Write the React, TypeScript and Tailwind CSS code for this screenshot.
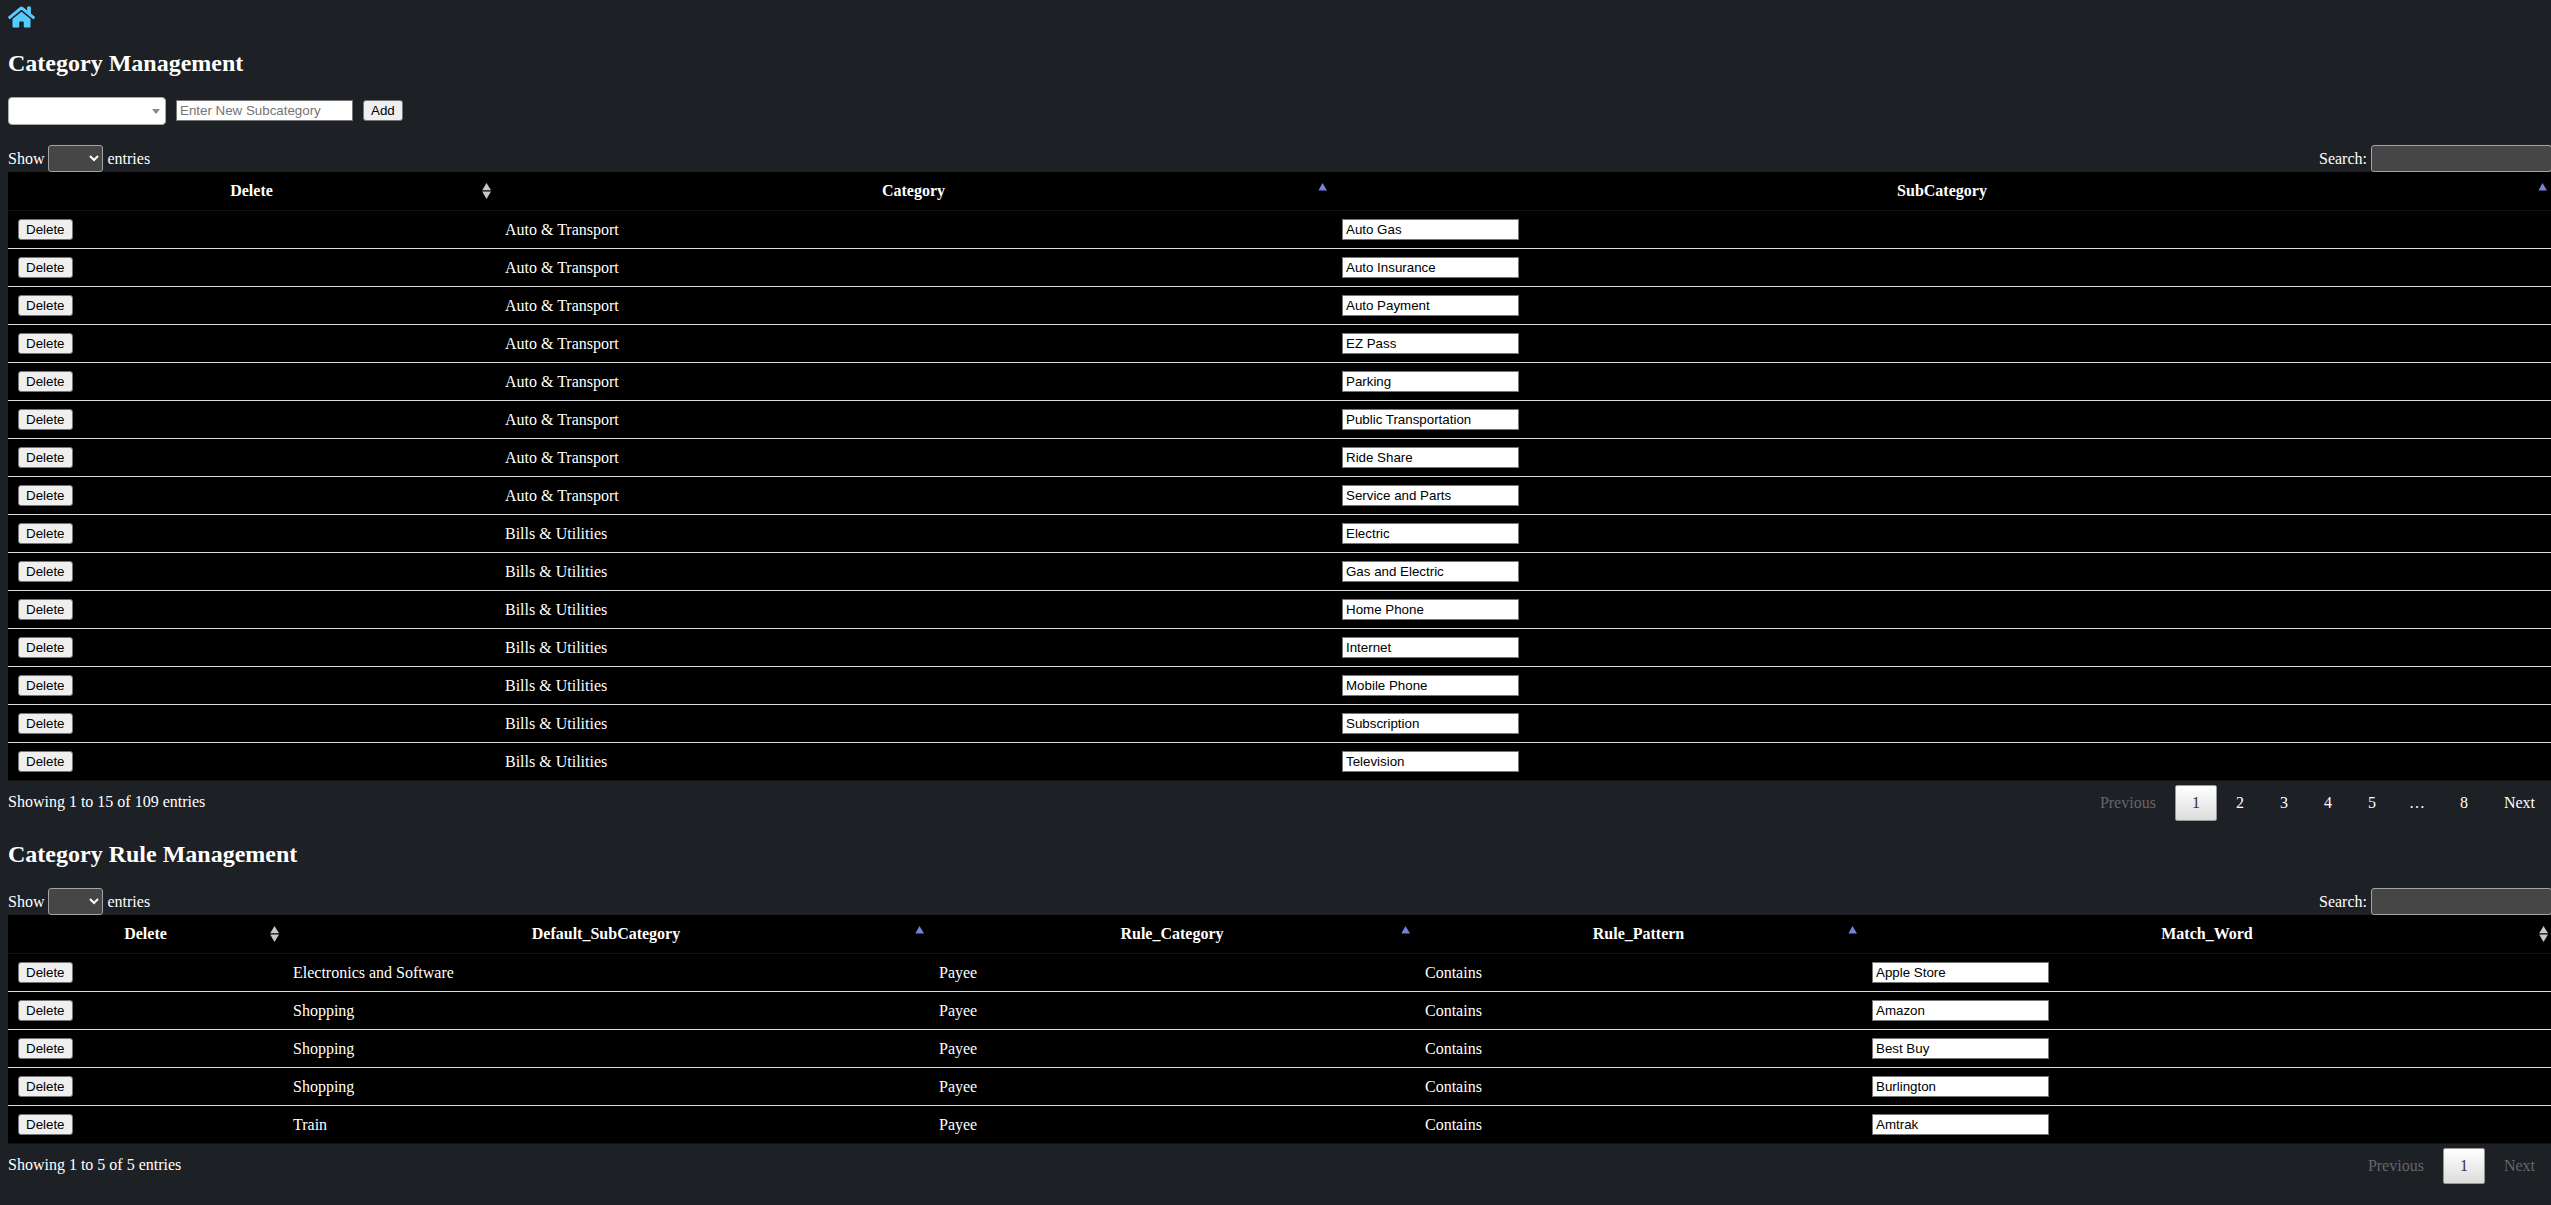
import React from "react";
import { FaHome } from "react-icons/fa";

type Sort = "both" | "asc";

function SortIcon({ kind }: { kind: Sort }) {
  return kind === "asc" ? (
    <span className="absolute right-[5px] top-[11px] block h-[16px] w-[9px]">
      <svg width="9" height="16" viewBox="0 0 9 16" className="block">
        <path d="M4.5 0 L9 7.5 L0.4 7.5 Z" fill="#7b7fdc" />
      </svg>
    </span>
  ) : (
    <span className="absolute right-[4px] top-[11px] block h-[16px] w-[9px]">
      <svg width="9" height="16" viewBox="0 0 9 16" className="block">
        <path d="M4.5 0 L9 7.3 L0.2 7.3 Z" fill="#c8c8c8" />
        <path d="M0.2 8.6 L9 8.6 L4.5 16 Z" fill="#c8c8c8" />
      </svg>
    </span>
  );
}

function NativeButton({ label }: { label: string }) {
  return (
    <button className="block h-[21px] rounded-[3px] border border-[#767676] bg-[#efefef] px-[7px] text-[13.333px] leading-[15px] text-black [font-family:'Liberation_Sans',sans-serif]">
      {label}
    </button>
  );
}

function CellInput({ value }: { value: string }) {
  return (
    <input
      readOnly
      value={value}
      className="block h-[21px] w-[177px] border border-[#767676] bg-white px-[3px] text-[13.333px] leading-[15px] text-black [font-family:'Liberation_Sans',sans-serif]"
    />
  );
}

function Controls() {
  return (
    <div className="flex h-[27px] w-[2544px] items-center justify-between">
      <div className="flex items-center gap-[4px]">
        <span>Show</span>
        <select className="h-[27px] w-[55px] rounded-[3px] border border-[#a3a3a3] bg-[#464646] text-white [color-scheme:dark]" />
        <span>entries</span>
      </div>
      <div className="flex items-center gap-[4px]">
        <span>Search:</span>
        <input className="h-[27px] w-[181px] rounded-[3px] border border-[#a3a3a3] bg-[#464646] text-white" />
      </div>
    </div>
  );
}

function Pager({ items }: { items: { label: string; state?: "off" | "on" | "gap" }[] }) {
  return (
    <div className="flex pt-[4px]">
      {items.map((it, i) =>
        it.state === "gap" ? (
          <span key={i} className="px-4 py-[9px] leading-[18px]">
            {it.label}
          </span>
        ) : (
          <span
            key={i}
            className={
              it.state === "on"
                ? "ml-[2px] rounded-[2px] border border-[#979797] bg-linear-to-b from-white to-[#dcdcdc] px-4 py-2 leading-[18px] text-[#333]"
                : it.state === "off"
                  ? "ml-[2px] border border-transparent px-4 py-2 leading-[18px] text-[#666]"
                  : "ml-[2px] border border-transparent px-4 py-2 leading-[18px] text-white"
            }
          >
            {it.label}
          </span>
        ),
      )}
    </div>
  );
}

function Footer({ info, items }: { info: string; items: { label: string; state?: "off" | "on" | "gap" }[] }) {
  return (
    <div className="flex h-[40px] w-[2544px] items-start justify-between">
      <div className="pt-[12px] leading-[18px]">{info}</div>
      <Pager items={items} />
    </div>
  );
}

function Table({
  widths,
  head,
  rows,
}: {
  widths: number[];
  head: { label: string; sort: Sort }[];
  rows: { text: (string | null)[]; value: string }[];
}) {
  return (
    <table className="w-[2544px] table-fixed border-separate border-spacing-0 bg-black">
      <colgroup>
        {widths.map((w, i) => (
          <col key={i} style={{ width: w }} />
        ))}
      </colgroup>
      <thead>
        <tr>
          {head.map((h) => (
            <th
              key={h.label}
              className="relative h-[39px] border-b border-[#111] px-[10px] text-center align-middle font-bold leading-[18px]"
            >
              {h.label}
              <SortIcon kind={h.sort} />
            </th>
          ))}
        </tr>
      </thead>
      <tbody>
        {rows.map((r, i) => (
          <tr key={i}>
            <td
              className={`h-[38px] border-b px-[10px] align-middle ${i === rows.length - 1 ? "border-[#111]" : "border-[#ddd]"}`}
            >
              <NativeButton label="Delete" />
            </td>
            {r.text.map((t, j) => (
              <td
                key={j}
                className={`h-[38px] border-b px-[10px] align-middle leading-[18px] ${i === rows.length - 1 ? "border-[#111]" : "border-[#ddd]"}`}
              >
                {t}
              </td>
            ))}
            <td
              className={`h-[38px] border-b px-[10px] align-middle ${i === rows.length - 1 ? "border-[#111]" : "border-[#ddd]"}`}
            >
              <CellInput value={r.value} />
            </td>
          </tr>
        ))}
      </tbody>
    </table>
  );
}

const catRows = [
  ["Auto & Transport", "Auto Gas"],
  ["Auto & Transport", "Auto Insurance"],
  ["Auto & Transport", "Auto Payment"],
  ["Auto & Transport", "EZ Pass"],
  ["Auto & Transport", "Parking"],
  ["Auto & Transport", "Public Transportation"],
  ["Auto & Transport", "Ride Share"],
  ["Auto & Transport", "Service and Parts"],
  ["Bills & Utilities", "Electric"],
  ["Bills & Utilities", "Gas and Electric"],
  ["Bills & Utilities", "Home Phone"],
  ["Bills & Utilities", "Internet"],
  ["Bills & Utilities", "Mobile Phone"],
  ["Bills & Utilities", "Subscription"],
  ["Bills & Utilities", "Television"],
].map(([a, b]) => ({ text: [a], value: b }));

const ruleRows = [
  ["Electronics and Software", "Apple Store"],
  ["Shopping", "Amazon"],
  ["Shopping", "Best Buy"],
  ["Shopping", "Burlington"],
  ["Train", "Amtrak"],
].map(([a, b]) => ({ text: [a, "Payee", "Contains"], value: b }));

export default function App() {
  return (
    <div className="h-screen overflow-hidden bg-[#1d2025] pl-2 text-[16px] text-white [font-family:'Liberation_Serif',serif]">
      <div className="h-[49px] pt-[5px]">
        <FaHome className="block h-[24px] w-[27px] text-[#55ccff]" />
      </div>
      <h3 className="text-[24px] font-bold leading-[28px]">Category Management</h3>
      <div className="mt-[20px] flex h-[28px] items-start">
        <div className="relative h-[28px] w-[158px] rounded-[4px] border border-[#aaa] bg-white">
          <span className="absolute left-[143px] top-[11px] h-0 w-0 border-x-[4px] border-t-[5px] border-x-transparent border-t-[#888]" />
        </div>
        <input
          placeholder="Enter New Subcategory"
          className="ml-[10px] mt-[3px] h-[21px] w-[177px] border border-[#767676] bg-white px-[3px] text-[13.333px] leading-[15px] text-black placeholder:text-[#757575] [font-family:'Liberation_Sans',sans-serif]"
        />
        <span className="ml-[10px] mt-[3px] flex">
          <NativeButton label="Add" />
        </span>
      </div>
      <div className="mt-[20px]">
        <Controls />
      </div>
      <Table
        widths={[487, 837, 1220]}
        head={[
          { label: "Delete", sort: "both" },
          { label: "Category", sort: "asc" },
          { label: "SubCategory", sort: "asc" },
        ]}
        rows={catRows}
      />
      <Footer
        info="Showing 1 to 15 of 109 entries"
        items={[
          { label: "Previous", state: "off" },
          { label: "1", state: "on" },
          { label: "2" },
          { label: "3" },
          { label: "4" },
          { label: "5" },
          { label: "…", state: "gap" },
          { label: "8" },
          { label: "Next" },
        ]}
      />
      <h3 className="mt-[19px] text-[24px] font-bold leading-[28px]">Category Rule Management</h3>
      <div className="mt-[20px]">
        <Controls />
      </div>
      <Table
        widths={[275, 646, 486, 447, 690]}
        head={[
          { label: "Delete", sort: "both" },
          { label: "Default_SubCategory", sort: "asc" },
          { label: "Rule_Category", sort: "asc" },
          { label: "Rule_Pattern", sort: "asc" },
          { label: "Match_Word", sort: "both" },
        ]}
        rows={ruleRows}
      />
      <Footer
        info="Showing 1 to 5 of 5 entries"
        items={[
          { label: "Previous", state: "off" },
          { label: "1", state: "on" },
          { label: "Next", state: "off" },
        ]}
      />
    </div>
  );
}
